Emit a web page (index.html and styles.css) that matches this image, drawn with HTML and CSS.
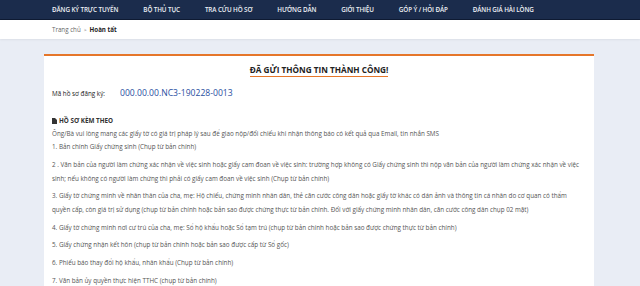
FILE: index.html
```html
<!DOCTYPE html>
<html lang="vi">
<head>
  <meta charset="UTF-8">
  <meta name="viewport" content="width=device-width, initial-scale=1.0">
  <title>Hoàn tất</title>
  <link rel="stylesheet" href="styles.css">
</head>
<body>
  <div class="topnav">
    <ul class="menu">
      <li>ĐĂNG KÝ TRỰC TUYẾN</li>
      <li>BỘ THỦ TỤC</li>
      <li>TRA CỨU HỒ SƠ</li>
      <li>HƯỚNG DẪN</li>
      <li>GIỚI THIỆU</li>
      <li>GÓP Ý / HỎI ĐÁP</li>
      <li>ĐÁNH GIÁ HÀI LÒNG</li>
    </ul>
  </div>
  <div class="breadcrumb">
    <span>Trang chủ</span>
    <span class="sep">&gt;</span>
    <b>Hoàn tất</b>
  </div>

  <div class="main">
    <div class="card">
      <h1 class="title"><span>ĐÃ GỬI THÔNG TIN THÀNH CÔNG!</span></h1>

      <div class="code-row">
        <span class="code-label">Mã hồ sơ đăng ký:</span>
        <span class="code">000.00.00.NC3-190228-0013</span>
      </div>

      <h2 class="section">
        <svg width="5" height="6" viewBox="0 0 5 6"><path d="M0 0h3l2 2v4H0z" fill="#333"/></svg>
        HỒ SƠ KÈM THEO
      </h2>
      <div class="intro">Ông/Bà vui lòng mang các giấy tờ có giá trị pháp lý sau để giao nộp/đối chiếu khi nhận thông báo có kết quả qua Email, tin nhắn SMS</div>
      <p>1. Bản chính Giấy chứng sinh (Chụp từ bản chính)</p>
      <p>2 . Văn bản của người làm chứng xác nhận về việc sinh hoặc giấy cam đoan về việc sinh: trường hợp không có Giấy chứng sinh thì nộp văn bản của người làm chứng xác nhận về việc sinh; nếu không có người làm chứng thì phải có giấy cam đoan về việc sinh (Chụp từ bản chính)</p>
      <p>3. Giấy tờ chứng minh về nhân thân của cha, mẹ: Hộ chiếu, chứng minh nhân dân, thẻ căn cước công dân hoặc giấy tờ khác có dán ảnh và thông tin cá nhân do cơ quan có thẩm quyền cấp, còn giá trị sử dụng (chụp từ bản chính hoặc bản sao được chứng thực từ bản chính. Đối với giấy chứng minh nhân dân, căn cước công dân chụp 02 mặt)</p>
      <p>4. Giấy tờ chứng minh nơi cư trú của cha, mẹ: Sổ hộ khẩu hoặc Sổ tạm trú (chụp từ bản chính hoặc bản sao được chứng thực từ bản chính)</p>
      <p>5. Giấy chứng nhận kết hôn (chụp từ bản chính hoặc bản sao được cấp từ Sổ gốc)</p>
      <p>6. Phiếu báo thay đổi hộ khẩu, nhân khẩu (Chụp từ bản chính)</p>
      <p>7. Văn bản ủy quyền thực hiện TTHC (chụp từ bản chính)</p>
    </div>
  </div>
</body>
</html>
```

FILE: styles.css
```css
body {
  margin: 0;
  font-family: "Open Sans", "Noto Sans", sans-serif;
  background-color: #e9edf5;
  color: #555;
}
.topnav {
  background-color: #1b2c4c;
  border-bottom: 1px solid #0f1b33;
  height: 19px;
}
.menu {
  list-style: none;
  margin: 0;
  padding: 0 0 0 52px;
  display: flex;
  gap: 25px;
  height: 19px;
  align-items: center;
}
.menu li {
  color: #eef1f6;
  font-size: 6.3px;
  font-weight: 600;
  letter-spacing: -0.1px;
}
.breadcrumb {
  background-color: #fff;
  height: 19px;
  padding-left: 52px;
  display: flex;
  align-items: center;
  gap: 3px;
  font-size: 6.2px;
  color: #666;
  box-shadow: 0 1px 2px rgba(0, 0, 0, 0.06);
}
.breadcrumb b {
  color: #222;
}
.breadcrumb .sep {
  font-size: 5px;
}
.main {
  padding: 15px 0 0 44px;
}
.card {
  width: 534px;
  background-color: #fff;
  border-top: 2px solid #e5762a;
  padding: 8px 8px 20px;
}
.title {
  margin: 0;
  text-align: center;
  font-size: 8.2px;
  font-weight: 700;
  color: #222;
}
.title span {
  display: inline-block;
  padding-bottom: 1px;
  border-bottom: 1.5px solid #e5762a;
  line-height: 10px;
}
.code-row {
  display: flex;
  align-items: center;
  margin-top: 9px;
  height: 14px;
}
.code-label {
  width: 68px;
  font-size: 6.3px;
  color: #222;
}
.code {
  font-size: 8.6px;
  color: #2a4f9f;
}
.section {
  margin: 16px 0 0;
  font-size: 6.3px;
  font-weight: 700;
  color: #333;
  display: flex;
  align-items: center;
  gap: 2px;
}
.intro {
  margin-top: 3px;
  font-size: 6.3px;
  line-height: 12px;
}
p {
  margin: 0 0 3.6px;
  font-size: 6.3px;
  line-height: 14px;
}
```
